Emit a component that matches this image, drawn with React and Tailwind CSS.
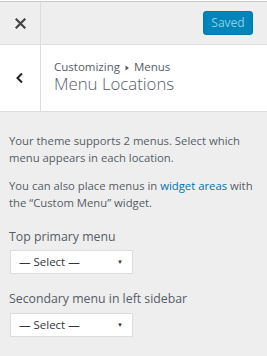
export default function App() {
  const font = { fontFamily: '"Open Sans", "Noto Sans", sans-serif' };
  return (
    <div className="w-[267px] h-[356px] bg-white overflow-hidden pt-[1px]" style={font}>
      {/* top bar */}
      <div className="flex h-[44px] bg-[#eeeeee] border-t border-[#c8c8c8] border-b border-b-[#dddddd]">
        <div className="w-[41px] border-r border-[#dddddd] flex items-center justify-center">
          <svg width="11" height="11" viewBox="0 0 11 11">
            <path d="M1.5 1.5 L9.5 9.5 M9.5 1.5 L1.5 9.5" stroke="#444" strokeWidth="2.2" strokeLinecap="square" />
          </svg>
        </div>
        <div className="flex-1 flex items-center justify-end pr-[14px]">
          <div className="w-[50px] h-[24px] rounded-[3px] bg-[#0085ba] border border-[#0077a8] flex items-center justify-center text-[12px] text-[#93cde5]">
            Saved
          </div>
        </div>
      </div>
      {/* header */}
      <div className="flex h-[67px] bg-white border-b border-[#dddddd]">
        <div className="w-[41px] border-r border-[#dddddd] flex items-center justify-center">
          <svg width="10" height="12" viewBox="0 0 10 12">
            <path d="M7 1.5 L2.5 6 L7 10.5" stroke="#222" strokeWidth="2" fill="none" />
          </svg>
        </div>
        <div className="flex-1 pl-[13px] pt-[15px]">
          <div className="flex items-center h-[14px] text-[11.5px] leading-[14px] text-[#555d66]">
            <span>Customizing</span>
            <svg width="12" height="6" viewBox="0 0 12 6" className="mx-[1px] mt-[1px]">
              <path d="M4.5 0.5 L8 3 L4.5 5.5 Z" fill="#555d66" />
            </svg>
            <span>Menus</span>
          </div>
          <div className="text-[16.8px] leading-[20px] font-light text-[#555d66]">Menu Locations</div>
        </div>
      </div>
      {/* body */}
      <div className="bg-[#eeeeee] h-full px-[9px] pt-[20px] text-[#555d66]">
        <p className="text-[11.3px] leading-[17px]">
          Your theme supports 2 menus. Select which<br />menu appears in each location.
        </p>
        <p className="text-[11.3px] leading-[17px] mt-[11px]">
          You can also place menus in <a className="text-[#0073aa]">widget areas</a> with<br />the “Custom Menu” widget.
        </p>
        <div className="mt-[16px] text-[12.3px] leading-[20px]">Top primary menu</div>
        <div className="mt-[3px] ml-[1px] w-[123px] h-[24px] bg-white border border-[#dddddd] flex items-center justify-between pl-[8px] pr-[9px] text-[11.5px] text-[#32373c]">
          <span>— Select —</span>
          <span className="text-[6px] text-[#333]">▼</span>
        </div>
        <div className="mt-[15px] text-[12.3px] leading-[20px]">Secondary menu in left sidebar</div>
        <div className="mt-[4px] ml-[1px] w-[123px] h-[24px] bg-white border border-[#dddddd] flex items-center justify-between pl-[8px] pr-[9px] text-[11.5px] text-[#32373c]">
          <span>— Select —</span>
          <span className="text-[6px] text-[#333]">▼</span>
        </div>
      </div>
    </div>
  );
}
